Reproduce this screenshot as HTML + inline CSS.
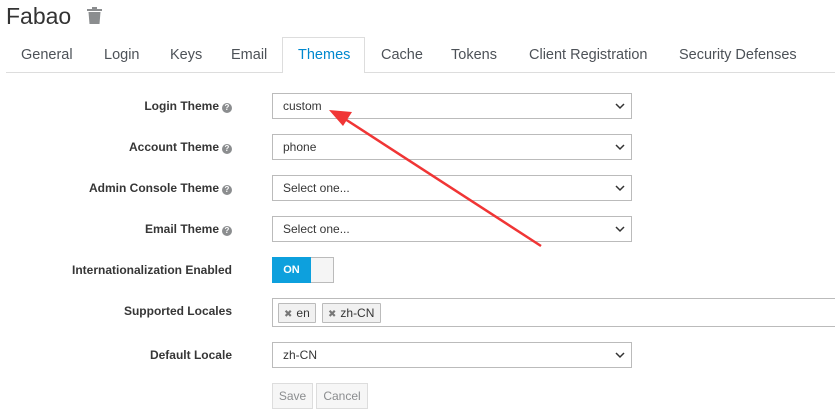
<!DOCTYPE html>
<html><head><style>
body{margin:0;width:835px;height:417px;background:#fff;font-family:"Liberation Sans",sans-serif;position:relative;overflow:hidden;color:#363636}
.a{position:absolute}
h1{position:absolute;left:6px;top:3px;margin:0;font-weight:normal;font-size:23px;color:#333}
.tab{position:absolute;top:47px;font-size:14.5px;color:#4d5258}
.line{left:6px;right:0;top:72px;height:1px;background:#ddd}
.lab{position:absolute;right:603px;font-size:12px;font-weight:bold;color:#363636;white-space:nowrap}
.q{display:inline-block;width:10px;height:10px;border-radius:50%;background:#8b8d8f;color:#fff;font-size:8px;line-height:10px;text-align:center;margin-left:3px;vertical-align:0px}
.sel{position:absolute;left:272px;width:358px;height:24px;border:1px solid #bbb;font-size:12px;line-height:24px;box-sizing:content-box}
.sel span{margin-left:10px}
.sel svg{position:absolute;right:6px;top:9px}
.btn{position:absolute;top:383px;height:24px;border:1px solid #ddd;background:#f6f6f6;color:#8b8d8f;font-size:12px;line-height:24px;text-align:center}
.chip{position:absolute;top:303px;height:18px;border:1px solid #bbb;border-radius:1px;background:#f1f1f1;font-size:12px;line-height:18px}
</style></head><body>
<h1>Fabao</h1>
<svg class="a" style="left:87px;top:7px" width="15" height="17" viewBox="0 0 15 17"><rect x="0" y="2" width="15" height="2" fill="#8b8d8f"/><rect x="5" y="0" width="5" height="3" fill="#8b8d8f"/><path d="M1.5 5h12l-1 12h-10z" fill="#8b8d8f"/></svg>
<div class="a" style="left:282px;top:37px;width:83px;height:36px;border:1px solid #ddd;border-bottom:none;background:#fff;box-sizing:border-box"></div>
<div class="a line"></div>
<div class="a" style="left:283px;top:72px;width:81px;height:1px;background:#fff"></div>
<div class="tab" style="left:21px">General</div>
<div class="tab" style="left:104px">Login</div>
<div class="tab" style="left:170px">Keys</div>
<div class="tab" style="left:231px">Email</div>
<div class="tab" style="left:298px;color:#0088ce">Themes</div>
<div class="tab" style="left:381px">Cache</div>
<div class="tab" style="left:451px">Tokens</div>
<div class="tab" style="left:529px">Client Registration</div>
<div class="tab" style="left:679px">Security Defenses</div>

<div class="lab" style="top:99px">Login Theme<span class="q">?</span></div>
<div class="lab" style="top:140px">Account Theme<span class="q">?</span></div>
<div class="lab" style="top:181px">Admin Console Theme<span class="q">?</span></div>
<div class="lab" style="top:222px">Email Theme<span class="q">?</span></div>
<div class="lab" style="top:263px">Internationalization Enabled</div>
<div class="lab" style="top:304px">Supported Locales</div>
<div class="lab" style="top:348px">Default Locale</div>

<div class="sel" style="top:93px"><span>custom</span><svg width="10" height="7"><path d="M1 1l4 4 4-4" stroke="#333" stroke-width="1.5" fill="none"/></svg></div>
<div class="sel" style="top:134px"><span>phone</span><svg width="10" height="7"><path d="M1 1l4 4 4-4" stroke="#333" stroke-width="1.5" fill="none"/></svg></div>
<div class="sel" style="top:175px"><span>Select one...</span><svg width="10" height="7"><path d="M1 1l4 4 4-4" stroke="#333" stroke-width="1.5" fill="none"/></svg></div>
<div class="sel" style="top:216px"><span>Select one...</span><svg width="10" height="7"><path d="M1 1l4 4 4-4" stroke="#333" stroke-width="1.5" fill="none"/></svg></div>

<div class="a" style="left:272px;top:257px;width:60px;height:24px;border:1px solid #bbb;background:#f5f5f5"></div>
<div class="a" style="left:272px;top:257px;width:39px;height:26px;background:#0da0dd;color:#fff;font-size:11px;font-weight:bold;line-height:26px;text-align:center">ON</div>

<div class="a" style="left:272px;top:298px;width:570px;height:27px;border:1px solid #bbb"></div>
<div class="chip" style="left:278px;width:36px"><span style="color:#777;margin:0 4px 0 5px;font-size:10px">✖</span>en</div>
<div class="chip" style="left:322px;width:57px"><span style="color:#777;margin:0 4px 0 5px;font-size:10px">✖</span>zh-CN</div>

<div class="sel" style="top:342px"><span>zh-CN</span><svg width="10" height="7"><path d="M1 1l4 4 4-4" stroke="#333" stroke-width="1.5" fill="none"/></svg></div>

<div class="btn" style="left:272px;width:39px">Save</div>
<div class="btn" style="left:316px;width:50px">Cancel</div>

<svg class="a" style="left:0;top:0" width="835" height="417"><line x1="541" y1="246" x2="345" y2="119" stroke="#f03535" stroke-width="2.5"/><path d="M329 110L352 112 343 126z" fill="#f03535"/></svg>
</body></html>
